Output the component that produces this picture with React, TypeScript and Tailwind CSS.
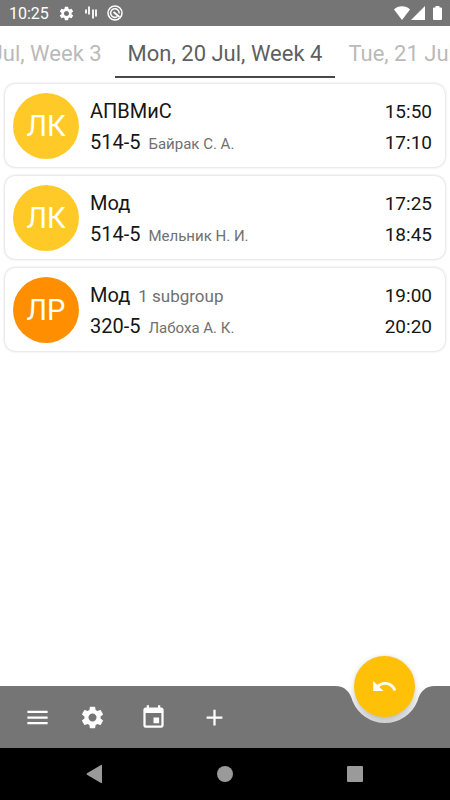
import { useState } from "react";
import { MdAdd, MdEvent, MdMenu, MdSettings, MdUndo } from "react-icons/md";

type Lesson = {
  kind: "ЛК" | "ЛР";
  subject: string;
  subgroup?: string;
  room: string;
  teacher: string;
  start: string;
  end: string;
};

const DAYS = ["Sun, 19 Jul, Week 3", "Mon, 20 Jul, Week 4", "Tue, 21 Jul, Week 4"];

const LESSONS: Lesson[] = [
  { kind: "ЛК", subject: "АПВМиС", room: "514-5", teacher: "Байрак С. А.", start: "15:50", end: "17:10" },
  { kind: "ЛК", subject: "Мод", room: "514-5", teacher: "Мельник Н. И.", start: "17:25", end: "18:45" },
  {
    kind: "ЛР",
    subject: "Мод",
    subgroup: "1 subgroup",
    room: "320-5",
    teacher: "Лабоха А. К.",
    start: "19:00",
    end: "20:20",
  },
];

const kindColors: Record<Lesson["kind"], string> = {
  ЛК: "bg-[#ffca28]",
  ЛР: "bg-[#ff8f00]",
};

function StatusBar() {
  return (
    <div className="flex h-[26px] items-center bg-[#757575] pr-2 pl-[9px] text-white">
      <span className="pt-0.5 text-base leading-6">10:25</span>
      <MdSettings className="ml-[9px] size-[17px]" />
      <svg viewBox="0 0 14 16" className="ml-[9px] h-4 w-3.5" stroke="currentColor" strokeWidth="1.8">
        <path d="M2 4.500v4M5 1.500v8M9 4.500v9M12 4.500v7" />
      </svg>
      <svg viewBox="0 0 16 16" className="ml-[9px] size-4" fill="none" stroke="currentColor">
        <circle cx="8" cy="8" r="7" strokeWidth="1.5" />
        <path d="M10.500 11.500A4.300 4.300 0 1 1 12.200 8.500" strokeWidth="1.5" />
        <path d="M6.500 7l6 5" strokeWidth="1.8" />
      </svg>
      <div className="ml-auto flex items-center">
        <svg viewBox="0 0 16 14" className="h-3.5 w-4" fill="currentColor">
          <path d="M8 14L0 3.500C2 1.500 5 .3 8 .3s6 1.200 8 3.200z" />
        </svg>
        <svg viewBox="0 0 14 14" className="ml-px size-3.5" fill="currentColor">
          <path d="M14 0v14H0z" />
        </svg>
        <svg viewBox="0 0 9 14" className="ml-2 h-3.5 w-[9px]" fill="currentColor">
          <path d="M2.500 0h4v1.500H8q1 0 1 1V13q0 1-1 1H1q-1 0-1-1V2.500q0-1 1-1h1.500z" />
        </svg>
      </div>
    </div>
  );
}

function LessonCard({ lesson }: { lesson: Lesson }) {
  return (
    <li className="flex min-h-[83px] items-center rounded-[10px] bg-white px-2 shadow-[0_0_3px_rgba(0,0,0,0.24)]">
      <div
        className={`flex size-[66px] shrink-0 items-center justify-center rounded-full pt-0.5 text-[29px] text-white ${kindColors[lesson.kind]}`}
      >
        {lesson.kind}
      </div>
      <div className="ml-[11px] min-w-0 flex-1 pt-0.5 text-xl leading-[31px] text-[#161616]">
        <p className="truncate">
          {lesson.subject}
          {lesson.subgroup && <span className="ml-2 text-[17px] leading-6 text-[#707070]">{lesson.subgroup}</span>}
        </p>
        <p className="truncate">
          {lesson.room}
          <span className="ml-2 text-[15px] leading-6 text-[#707070]">{lesson.teacher}</span>
        </p>
      </div>
      <div className="mr-[5px] pt-0.5 text-right text-[19px] leading-[31px] text-[#161616]">
        <p>{lesson.start}</p>
        <p>{lesson.end}</p>
      </div>
    </li>
  );
}

function BottomBar() {
  return (
    <footer className="relative flex h-[62px] text-white">
      <div className="flex flex-1 items-center bg-[#757575] pl-6">
        <button aria-label="Menu" className="w-[55px]">
          <MdMenu className="size-[27px]" />
        </button>
        <button aria-label="Settings" className="w-[61px]">
          <MdSettings className="size-[27px]" />
        </button>
        <button aria-label="Calendar" className="w-[61px]">
          <MdEvent className="size-[27px]" />
        </button>
        <button aria-label="Add">
          <MdAdd className="size-[27px]" />
        </button>
      </div>
      {/* Notch for the floating button */}
      <svg viewBox="0 0 100 62" className="h-[62px] w-[100px] shrink-0">
        <defs>
          <linearGradient id="notch" x1="0" y1="0" x2="0" y2="1">
            <stop offset="0" stopColor="#fff" />
            <stop offset="1" stopColor="#d2d2d2" />
          </linearGradient>
        </defs>
        <path d="M0 0H100V38H0z" fill="url(#notch)" />
        <path d="M0 0C10 0 15 6 17.500 15A35 35 0 0 0 82.500 15C85 6 90 0 100 0V62H0z" fill="#757575" />
      </svg>
      <div className="w-[15px] bg-[#757575]" />
      <button
        aria-label="Back to today"
        className="absolute -top-[30px] right-[35px] flex size-[61px] items-center justify-center rounded-full bg-[#ffc107] shadow-[0_1px_5px_rgba(0,0,0,0.18)]"
      >
        <MdUndo className="size-[27px]" />
      </button>
    </footer>
  );
}

function SystemNav() {
  return (
    <div className="flex h-[52px] items-center justify-center gap-[106px] bg-black text-[#9a9a9a]">
      <button aria-label="Back">
        <svg viewBox="0 0 24 24" className="size-6" fill="currentColor">
          <path d="M19 3.500v17q0 1-1 .5L4 12.800q-1-.8 0-1.600L18 3q1-.5 1 .5z" />
        </svg>
      </button>
      <button aria-label="Home">
        <svg viewBox="0 0 24 24" className="size-6" fill="currentColor">
          <circle cx="12" cy="12" r="8" />
        </svg>
      </button>
      <button aria-label="Recents">
        <svg viewBox="0 0 24 24" className="size-6" fill="currentColor">
          <rect x="4" y="4" width="16" height="16" rx="1" />
        </svg>
      </button>
    </div>
  );
}

function App() {
  const [active, setActive] = useState(1);

  return (
    <div className="flex min-h-screen flex-col overflow-hidden bg-white font-[Roboto,sans-serif]">
      <StatusBar />

      {/* Day tabs */}
      <nav className="grid h-[52px] grid-cols-[1fr_auto_1fr] text-[22px] whitespace-nowrap">
        {DAYS.map((day, i) => (
          <div key={day} className={`flex min-w-0 ${i === 0 ? "justify-end" : "justify-start"}`}>
            <button
              onClick={() => setActive(i)}
              className={`shrink-0 border-b-2 px-[13px] pt-1 ${
                i === active ? "border-[#48484a] text-[#5f5f5f]" : "border-transparent text-[#bababa]"
              }`}
            >
              {day}
            </button>
          </div>
        ))}
      </nav>

      <main className="flex-1 px-[5px] pt-[6px]">
        <ul className="flex flex-col gap-[9px]">
          {LESSONS.map((lesson) => (
            <LessonCard key={lesson.start} lesson={lesson} />
          ))}
        </ul>
      </main>

      <BottomBar />
      <SystemNav />
    </div>
  );
}

export default App;
